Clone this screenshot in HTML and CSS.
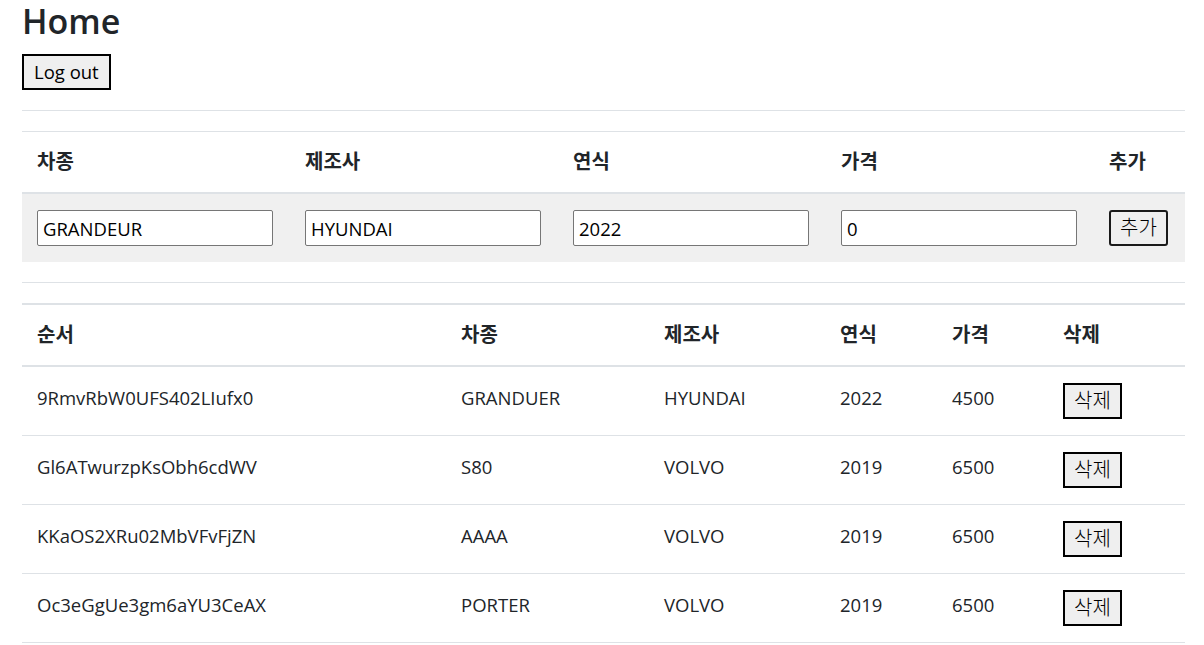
FILE: index.html
```html
<!DOCTYPE html>
<html lang="ko">

<head>
    <meta charset="UTF-8">
    <meta name="viewport" content="width=device-width, initial-scale=1.0">
    <title>Home</title>
    <link rel="stylesheet" href="styles.css">
</head>

<body>
    <main class="page">
        <h1 class="title">Home</h1>
        <button class="btn">Log out</button>

        <div class="rule"></div>

        <table class="grid add-form">
            <thead>
                <tr>
                    <th class="col-add">차종</th>
                    <th class="col-add">제조사</th>
                    <th class="col-add">연식</th>
                    <th class="col-add">가격</th>
                    <th>추가</th>
                </tr>
            </thead>
            <tbody>
                <tr class="active">
                    <td class="cell-ctrl"><input class="field" type="text" value="GRANDEUR"></td>
                    <td class="cell-ctrl"><input class="field" type="text" value="HYUNDAI"></td>
                    <td class="cell-ctrl"><input class="field" type="text" value="2022"></td>
                    <td class="cell-ctrl"><input class="field" type="text" value="0"></td>
                    <td class="cell-ctrl"><button class="btn btn-ko btn-round">추가</button></td>
                </tr>
            </tbody>
        </table>

        <div class="rule"></div>

        <table class="grid list">
            <thead>
                <tr>
                    <th class="col-id">순서</th>
                    <th class="col-model">차종</th>
                    <th class="col-maker">제조사</th>
                    <th class="col-year">연식</th>
                    <th class="col-price">가격</th>
                    <th>삭제</th>
                </tr>
            </thead>
            <tbody>
                <tr>
                    <td>9RmvRbW0UFS402LIufx0</td>
                    <td>GRANDUER</td>
                    <td>HYUNDAI</td>
                    <td>2022</td>
                    <td>4500</td>
                    <td class="cell-ctrl"><button class="btn btn-ko">삭제</button></td>
                </tr>
                <tr>
                    <td>Gl6ATwurzpKsObh6cdWV</td>
                    <td>S80</td>
                    <td>VOLVO</td>
                    <td>2019</td>
                    <td>6500</td>
                    <td class="cell-ctrl"><button class="btn btn-ko">삭제</button></td>
                </tr>
                <tr>
                    <td>KKaOS2XRu02MbVFvFjZN</td>
                    <td>AAAA</td>
                    <td>VOLVO</td>
                    <td>2019</td>
                    <td>6500</td>
                    <td class="cell-ctrl"><button class="btn btn-ko">삭제</button></td>
                </tr>
                <tr>
                    <td>Oc3eGgUe3gm6aYU3CeAX</td>
                    <td>PORTER</td>
                    <td>VOLVO</td>
                    <td>2019</td>
                    <td>6500</td>
                    <td class="cell-ctrl"><button class="btn btn-ko">삭제</button></td>
                </tr>
            </tbody>
        </table>
    </main>
</body>

</html>
```

FILE: styles.css
```css
html {
    box-sizing: border-box;
    font-family: "Open Sans", "Noto Sans CJK KR", sans-serif;
    font-size: 18.5px;
    color: #212529;
}

*,
*::before,
*::after {
    box-sizing: inherit;
}

body {
    margin: 0;
    background-color: #fff;
}

.page {
    padding: 0 19px 0 22px;
}

.title {
    margin: 0 0 11px;
    font-size: 34px;
    font-weight: 600;
    line-height: 43px;
}

.btn {
    display: inline-block;
    margin: 0;
    padding: 4px 10px;
    font: inherit;
    line-height: 24px;
    color: #000;
    background-color: #efefef;
    border: 2px solid #000;
    border-radius: 0;
    cursor: pointer;
}

.btn-ko {
    padding: 4px 9px;
    font-size: 20px;
    font-weight: 300;
}

.btn-round {
    border-color: #1a1a1a;
    border-radius: 3px;
}

.rule {
    margin: 20px 0;
    border-top: 1px solid #dee2e6;
}

.grid {
    width: 100%;
    border-collapse: collapse;
    table-layout: fixed;
}

.grid th {
    padding: 18px 15px;
    text-align: left;
    font-size: 20px;
    font-weight: 700;
    line-height: 24px;
    border-bottom: 2px solid #dee2e6;
}

.grid td {
    padding: 13px 15px 19px;
    line-height: 24px;
    vertical-align: middle;
}

.grid .cell-ctrl {
    padding: 16px 17px 16px 15px;
}

.add-form {
    border-top: 1px solid #dee2e6;
}

.add-form .active td {
    background-color: #f0f0f0;
}

.list {
    border-top: 2px solid #dee2e6;
}

.list td {
    border-bottom: 1px solid #dee2e6;
}

.col-add {
    width: 268px;
}

.col-id {
    width: 424px;
}

.col-model {
    width: 203px;
}

.col-maker {
    width: 176px;
}

.col-year {
    width: 112px;
}

.col-price {
    width: 111px;
}

.field {
    display: block;
    width: 100%;
    height: 36px;
    margin: 0;
    padding: 0 5px;
    font: inherit;
    color: #000;
    background-color: #fff;
    border: 1px solid #767676;
    border-radius: 2px;
}
```
